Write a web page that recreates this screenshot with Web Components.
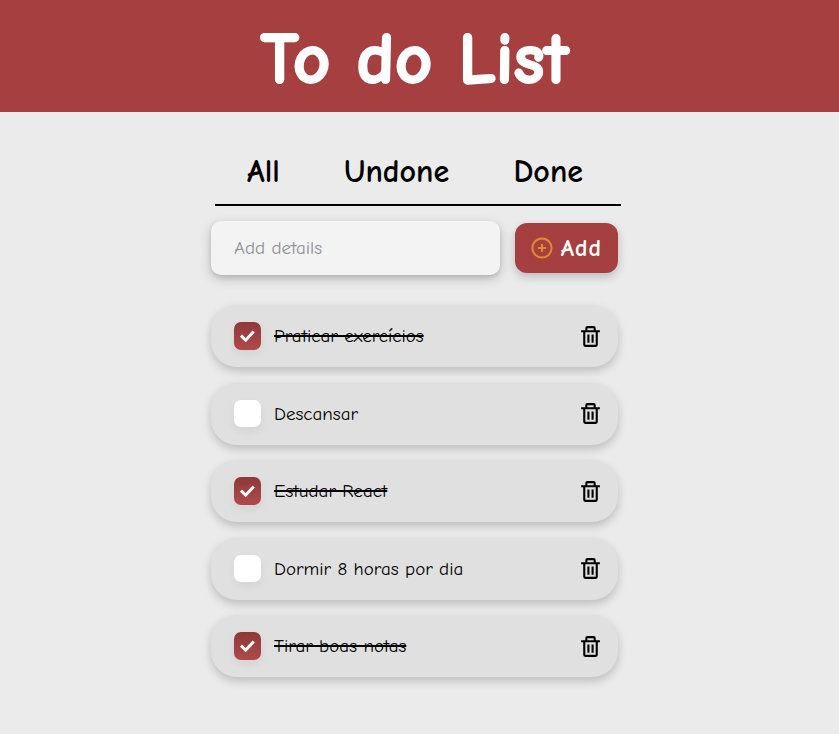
<!DOCTYPE html>
<html lang="pt-BR">
<head>
<meta charset="utf-8">
<meta name="viewport" content="width=device-width, initial-scale=1">
<title>To do List</title>
<style>
  body { margin: 0; background: #ebebeb; color: #000; font-family: "Comic Sans MS", "Comic Neue", "Noto Sans", sans-serif; }
</style>
</head>
<body>
<todo-app></todo-app>
<script>
const define = (name, html, setup) => {
  const template = document.createElement('template');
  template.innerHTML = html;
  customElements.define(name, class extends HTMLElement {
    connectedCallback() {
      if (this.shadowRoot) return;
      this.attachShadow({ mode: 'open' }).append(template.content.cloneNode(true));
      if (setup) setup(this, this.shadowRoot);
    }
  });
};

define('todo-header', `
  <style>
    :host { display: block; background: #a64040; color: #fff; text-align: center; }
    h1 { margin: 0; padding: 11px 10px 5px 0; font-size: 73px; line-height: 96px; font-weight: 700; -webkit-text-stroke: 2px currentColor; }
  </style>
  <h1><slot></slot></h1>`);

define('todo-tabs', `
  <style>
    :host { display: block; }
    nav { display: flex; justify-content: space-between; padding: 0 38px 12px 32px; border-bottom: 2px solid #000; }
    a { color: inherit; text-decoration: none; font-size: 32px; line-height: 40px; font-weight: 600; }
  </style>
  <nav><a href="#all">All</a><a href="#undone">Undone</a><a href="#done">Done</a></nav>`);

define('todo-form', `
  <style>
    :host { display: block; }
    form { display: flex; align-items: center; gap: 15px; }
    input { flex: 1; min-width: 0; box-sizing: border-box; height: 54px; padding: 0 23px; border: 0; border-radius: 10px;
      background: #f3f3f3; font-family: inherit; font-size: 19px; color: #000;
      box-shadow: 0 4px 12px rgba(0,0,0,.2), 0 2px 4px rgba(0,0,0,.1); }
    input::placeholder { color: #8f9198; opacity: 1; }
    button { display: flex; align-items: center; gap: 8px; height: 50px; padding: 0 16px; border: 0; border-radius: 12px;
      background: #a64040; color: #fff; font-family: inherit; font-size: 24px; font-weight: 600; letter-spacing: 1px;
      box-shadow: 0 4px 10px rgba(0,0,0,.2); }
    svg { width: 22px; height: 22px; }
  </style>
  <form>
    <input type="text" name="details" placeholder="Add details" aria-label="Add details">
    <button type="button">
      <svg viewBox="0 0 22 22" fill="none" stroke="#e08a2c" stroke-width="2" aria-hidden="true"><circle cx="11" cy="11" r="9.6"/><path d="M11 7v8M7 11h8"/></svg>
      Add
    </button>
  </form>`);

define('todo-item', `
  <style>
    :host { display: flex; align-items: center; box-sizing: border-box; min-height: 62px; padding: 0 15px 0 23px;
      border-radius: 26px; background: #e0e0e0; box-shadow: 0 4px 10px rgba(0,0,0,.2); }
    label { flex: 1; display: flex; align-items: center; gap: 13px; font-size: 19px; line-height: 24px; }
    input { appearance: none; flex: none; width: 27px; height: 27px; margin: 0; border-radius: 7px;
      background: #fff; box-shadow: 0 4px 8px rgba(0,0,0,.06); }
    input:checked { height: 28px; background: linear-gradient(#8f3838, #b04a4a); }
    .box { display: grid; place-items: center; }
    .box > * { grid-area: 1 / 1; }
    .check { width: 27px; height: 27px; pointer-events: none; visibility: hidden; }
    input:checked + .check { visibility: visible; }
    :host([done]) .text { text-decoration: line-through 2px; }
    button { display: grid; padding: 0; border: 0; background: none; color: #000; }
    .trash { width: 25px; height: 25px; }
  </style>
  <label>
    <span class="box"><input type="checkbox">
      <svg class="check" viewBox="0 0 27 27" fill="none" stroke="#fff" stroke-width="3" aria-hidden="true"><path d="m7 12.6 4.7 4.6 8-8.8"/></svg></span>
    <span class="text"><slot></slot></span>
  </label>
  <button type="button" aria-label="Delete">
    <svg class="trash" viewBox="0 0 24 24" fill="currentColor" aria-hidden="true"><path d="M5 20a2 2 0 0 0 2 2h10a2 2 0 0 0 2-2V8h2V6h-4V4a2 2 0 0 0-2-2H9a2 2 0 0 0-2 2v2H3v2h2zM9 4h6v2H9zM7 8h10v12H7z" fill-rule="evenodd"/><path d="M9 10h2v8H9zm4 0h2v8h-2z"/></svg>
  </button>`, (host, root) => {
  const box = root.querySelector('input');
  box.checked = host.hasAttribute('done');
  box.addEventListener('change', () => host.toggleAttribute('done', box.checked));
  root.querySelector('button').addEventListener('click', () => host.remove());
});

define('todo-list', `
  <style>
    :host { display: flex; flex-direction: column; justify-content: space-between; min-height: 372px; }
  </style>
  <slot></slot>`);

define('todo-app', `
  <style>
    :host { display: block; }
    main { box-sizing: border-box; width: min(100% - 32px, 417px); margin: 0 auto; padding: 40px 10px 40px 0; }
    todo-tabs { margin: 0 -3px 15px 4px; }
    todo-form { margin-bottom: 30px; }
  </style>
  <todo-header>To do List</todo-header>
  <main>
    <todo-tabs></todo-tabs>
    <todo-form></todo-form>
    <todo-list>
      <todo-item done>Praticar exercícios</todo-item>
      <todo-item>Descansar</todo-item>
      <todo-item done>Estudar React</todo-item>
      <todo-item>Dormir 8 horas por dia</todo-item>
      <todo-item done>Tirar boas notas</todo-item>
    </todo-list>
  </main>`);
</script>
</body>
</html>
